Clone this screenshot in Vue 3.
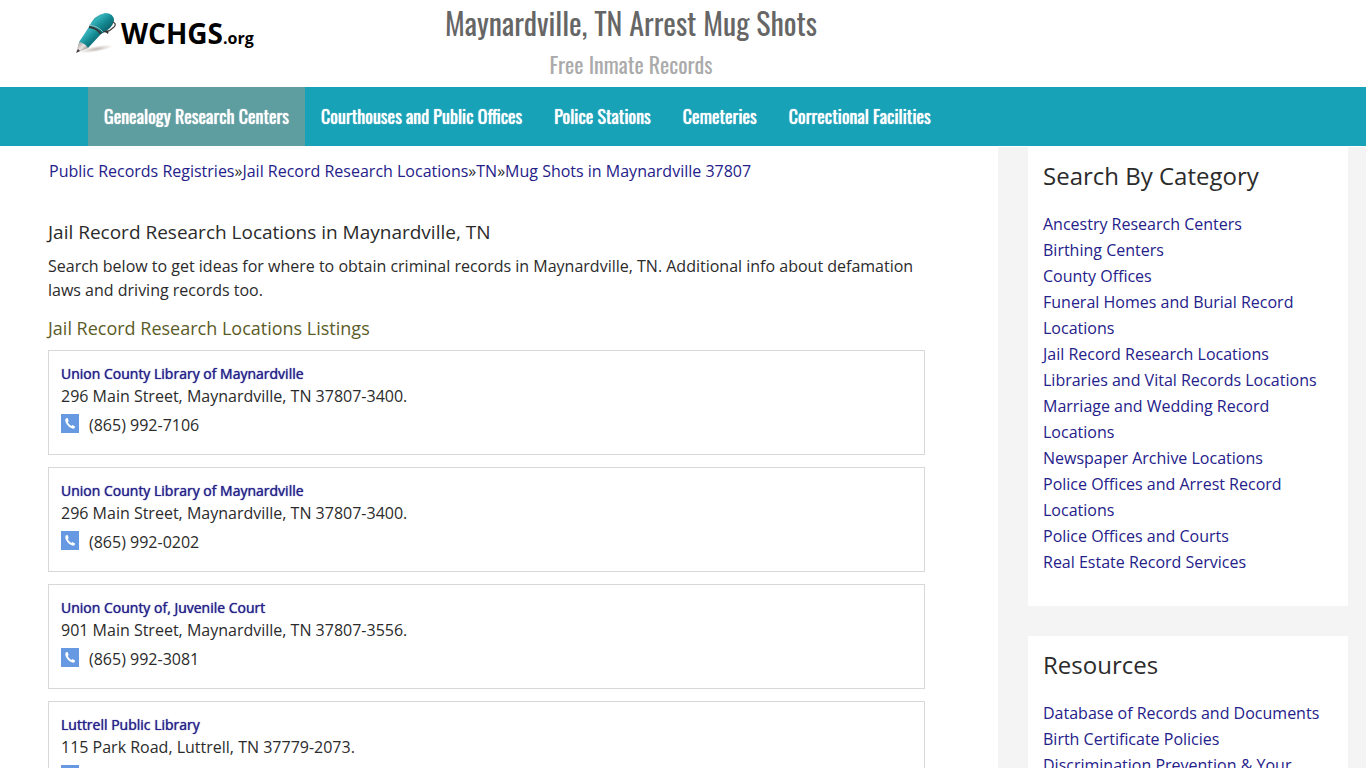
<script setup>
const navItems = [
  'Genealogy Research Centers',
  'Courthouses and Public Offices',
  'Police Stations',
  'Cemeteries',
  'Correctional Facilities',
]

const crumbs = [
  'Public Records Registries',
  'Jail Record Research Locations',
  'TN',
  'Mug Shots in Maynardville 37807',
]

const listings = [
  { name: 'Union County Library of Maynardville', address: '296 Main Street, Maynardville, TN 37807-3400.', phone: '(865) 992-7106' },
  { name: 'Union County Library of Maynardville', address: '296 Main Street, Maynardville, TN 37807-3400.', phone: '(865) 992-0202' },
  { name: 'Union County of, Juvenile Court', address: '901 Main Street, Maynardville, TN 37807-3556.', phone: '(865) 992-3081' },
  { name: 'Luttrell Public Library', address: '115 Park Road, Luttrell, TN 37779-2073.', phone: '' },
]

const panels = [
  {
    title: 'Search By Category',
    links: [
      'Ancestry Research Centers',
      'Birthing Centers',
      'County Offices',
      'Funeral Homes and Burial Record Locations',
      'Jail Record Research Locations',
      'Libraries and Vital Records Locations',
      'Marriage and Wedding Record Locations',
      'Newspaper Archive Locations',
      'Police Offices and Arrest Record Locations',
      'Police Offices and Courts',
      'Real Estate Record Services',
    ],
  },
  {
    title: 'Resources',
    links: [
      'Database of Records and Documents',
      'Birth Certificate Policies',
      'Discrimination Prevention & Your',
    ],
  },
]
</script>

<template>
  <div class="page">
    <header class="header">
      <a class="logo" href="#" aria-label="WCHGS.org">
        <svg class="pen" viewBox="0 0 44 44" aria-hidden="true">
          <defs>
            <linearGradient id="barrel" x1="0" y1="0" x2="1" y2="1">
              <stop offset="0" stop-color="#0a5561" />
              <stop offset="0.3" stop-color="#35b3ba" />
              <stop offset="0.55" stop-color="#128790" />
              <stop offset="1" stop-color="#053f4b" />
            </linearGradient>
            <linearGradient id="tip" x1="0" y1="0" x2="1" y2="1">
              <stop offset="0" stop-color="#8d8d8d" />
              <stop offset="0.5" stop-color="#e8e4e2" />
              <stop offset="1" stop-color="#4c4646" />
            </linearGradient>
            <radialGradient id="shade">
              <stop offset="0" stop-color="#a99b92" stop-opacity="0.7" />
              <stop offset="1" stop-color="#a99b92" stop-opacity="0" />
            </radialGradient>
          </defs>
          <ellipse cx="21" cy="37" rx="17" ry="3" fill="url(#shade)" transform="rotate(-10 21 37)" />
          <path d="M1 41 L4 30 Q10 30 13 36 Z" fill="url(#tip)" />
          <path d="M1 41 L3 37 L5 39 Z" fill="#3b3434" />
          <path d="M4 30 L14 15 Q23 16 26 22 L13 36 Q10 31 4 30 Z" fill="url(#barrel)" />
          <path d="M14 15 Q19 3 30 1 Q39 1 39 9 Q37 17 26 22 Q22 16 14 15 Z" fill="url(#barrel)" />
          <path d="M14 15 Q22 16 26 22" fill="none" stroke="#34383a" stroke-width="2" />
          <path d="M14 13 Q23 14 28 20" fill="none" stroke="#8fbcc0" stroke-width="1" />
          <path d="M38 10 Q42 12 39 15 L34 19" fill="none" stroke="#4a4242" stroke-width="1.3" />
          <path d="M27 20 L34 18 L33 22 L31 20.5 Z" fill="#332d2d" />
        </svg>
        <span class="brand">WCHGS<span class="suffix">.org</span></span>
      </a>
      <div class="titles">
        <h1>Maynardville, TN Arrest Mug Shots</h1>
        <p>Free Inmate Records</p>
      </div>
    </header>

    <nav class="nav" aria-label="Main">
      <a v-for="(item, i) in navItems" :key="item" href="#" :class="{ active: i === 0 }">{{ item }}</a>
    </nav>

    <div class="body">
      <main class="main">
        <div class="crumbs">
          <template v-for="(crumb, i) in crumbs" :key="crumb"><span v-if="i">»</span><a href="#">{{ crumb }}</a></template>
        </div>
        <h2>Jail Record Research Locations in Maynardville, TN</h2>
        <p class="intro">Search below to get ideas for where to obtain criminal records in Maynardville, TN. Additional info about defamation laws and driving records too.</p>
        <h3>Jail Record Research Locations Listings</h3>
        <article v-for="(item, i) in listings" :key="i" class="card">
          <a href="#" class="name">{{ item.name }}</a>
          <p class="address">{{ item.address }}</p>
          <p class="phone">
            <svg viewBox="0 0 18 19" aria-hidden="true">
              <rect width="18" height="19" fill="#6699e2" />
              <path d="M5 4.2 L6.6 4 L7.7 6.9 L6.7 8 Q7.8 10.7 10.3 12 L11.5 11.1 L14 12.6 L13.7 14.1 Q12.6 15.2 10.7 14.3 Q6.4 12.4 4.6 8 Q3.7 5.4 5 4.2 Z" fill="#fff" />
            </svg>
            <span>{{ item.phone }}</span>
          </p>
        </article>
      </main>

      <aside class="side">
        <section v-for="panel in panels" :key="panel.title" class="panel">
          <h2>{{ panel.title }}</h2>
          <ul>
            <li v-for="link in panel.links" :key="link"><a href="#">{{ link }}</a></li>
          </ul>
        </section>
      </aside>
    </div>
  </div>
</template>

<style>
body {
  margin: 0;
}
</style>

<style scoped>
.page {
  height: 100vh;
  overflow: hidden;
  display: flex;
  flex-direction: column;
  background: #f4f4f4;
  color: #2b2b2b;
  font-family: "Open Sans", "Noto Sans", sans-serif;
  font-size: 16px;
  line-height: 24px;
}
h1, h2, h3, p, ul {
  margin: 0;
  padding: 0;
  font-weight: 400;
}
a {
  color: #25218a;
  text-decoration: none;
}
.header {
  flex: none;
  display: grid;
  grid-template-columns: 355px 552px 1fr;
  height: 87px;
  background: #fff;
}
.logo {
  display: flex;
  align-items: flex-start;
  padding: 12px 0 0 75px;
  color: #000;
}
.pen {
  width: 44px;
  height: 44px;
}
.brand {
  margin-left: 2px;
  font-size: 28px;
  font-weight: 700;
  line-height: 42px;
}
.suffix {
  font-size: 16px;
}
.titles {
  text-align: center;
  font-family: Oswald, "Open Sans", sans-serif;
  white-space: nowrap;
}
.titles h1 {
  padding-top: 3px;
  font-size: 30px;
  line-height: 40px;
  color: #666;
}
.titles p {
  font-size: 22px;
  line-height: 42px;
  color: #aaa;
}
.nav {
  flex: none;
  display: flex;
  padding-left: 88px;
  background: #18a2b8;
  border-bottom: 1px solid #fff;
  font-family: Oswald, "Open Sans", sans-serif;
  font-size: 18px;
  line-height: 59px;
}
.nav a {
  padding: 0 16px;
  color: #fff;
  text-shadow: 0 0 1px #fff;
  white-space: nowrap;
}
.nav .active {
  background: #5f9ea0;
}
.body {
  flex: none;
  display: flex;
  align-items: flex-start;
  gap: 30px;
  padding-right: 18px;
}
.main {
  flex: 1;
  box-sizing: border-box;
  padding: 12px 73px 30px 48px;
  background: #fff;
}
.crumbs {
  padding-left: 1px;
}
.main h2 {
  margin-top: 36px;
  font-size: 19px;
  line-height: 26px;
}
.intro {
  margin-top: 9px;
}
.main h3 {
  margin: 14px 0 10px;
  font-size: 18px;
  line-height: 24px;
  color: #5c5c28;
}
.card {
  box-sizing: border-box;
  min-height: 105px;
  margin-bottom: 12px;
  padding: 12px;
  border: 1px solid #d8d8d8;
}
.name {
  display: block;
  font-size: 14px;
  line-height: 22px;
  text-shadow: 0 0 1px #25218a;
}
.address {
  line-height: 22px;
}
.phone {
  display: flex;
  align-items: center;
  gap: 10px;
  height: 24px;
  margin-top: 6px;
}
.phone svg {
  width: 18px;
  height: 19px;
  margin-bottom: 3px;
}
.side {
  width: 320px;
  display: grid;
  gap: 30px;
}
.panel {
  padding: 12px 15px 31px;
  background: #fff;
}
.panel h2 {
  margin-bottom: 18px;
  font-size: 24px;
  line-height: 34px;
}
.panel ul {
  list-style: none;
  line-height: 26px;
}
</style>
